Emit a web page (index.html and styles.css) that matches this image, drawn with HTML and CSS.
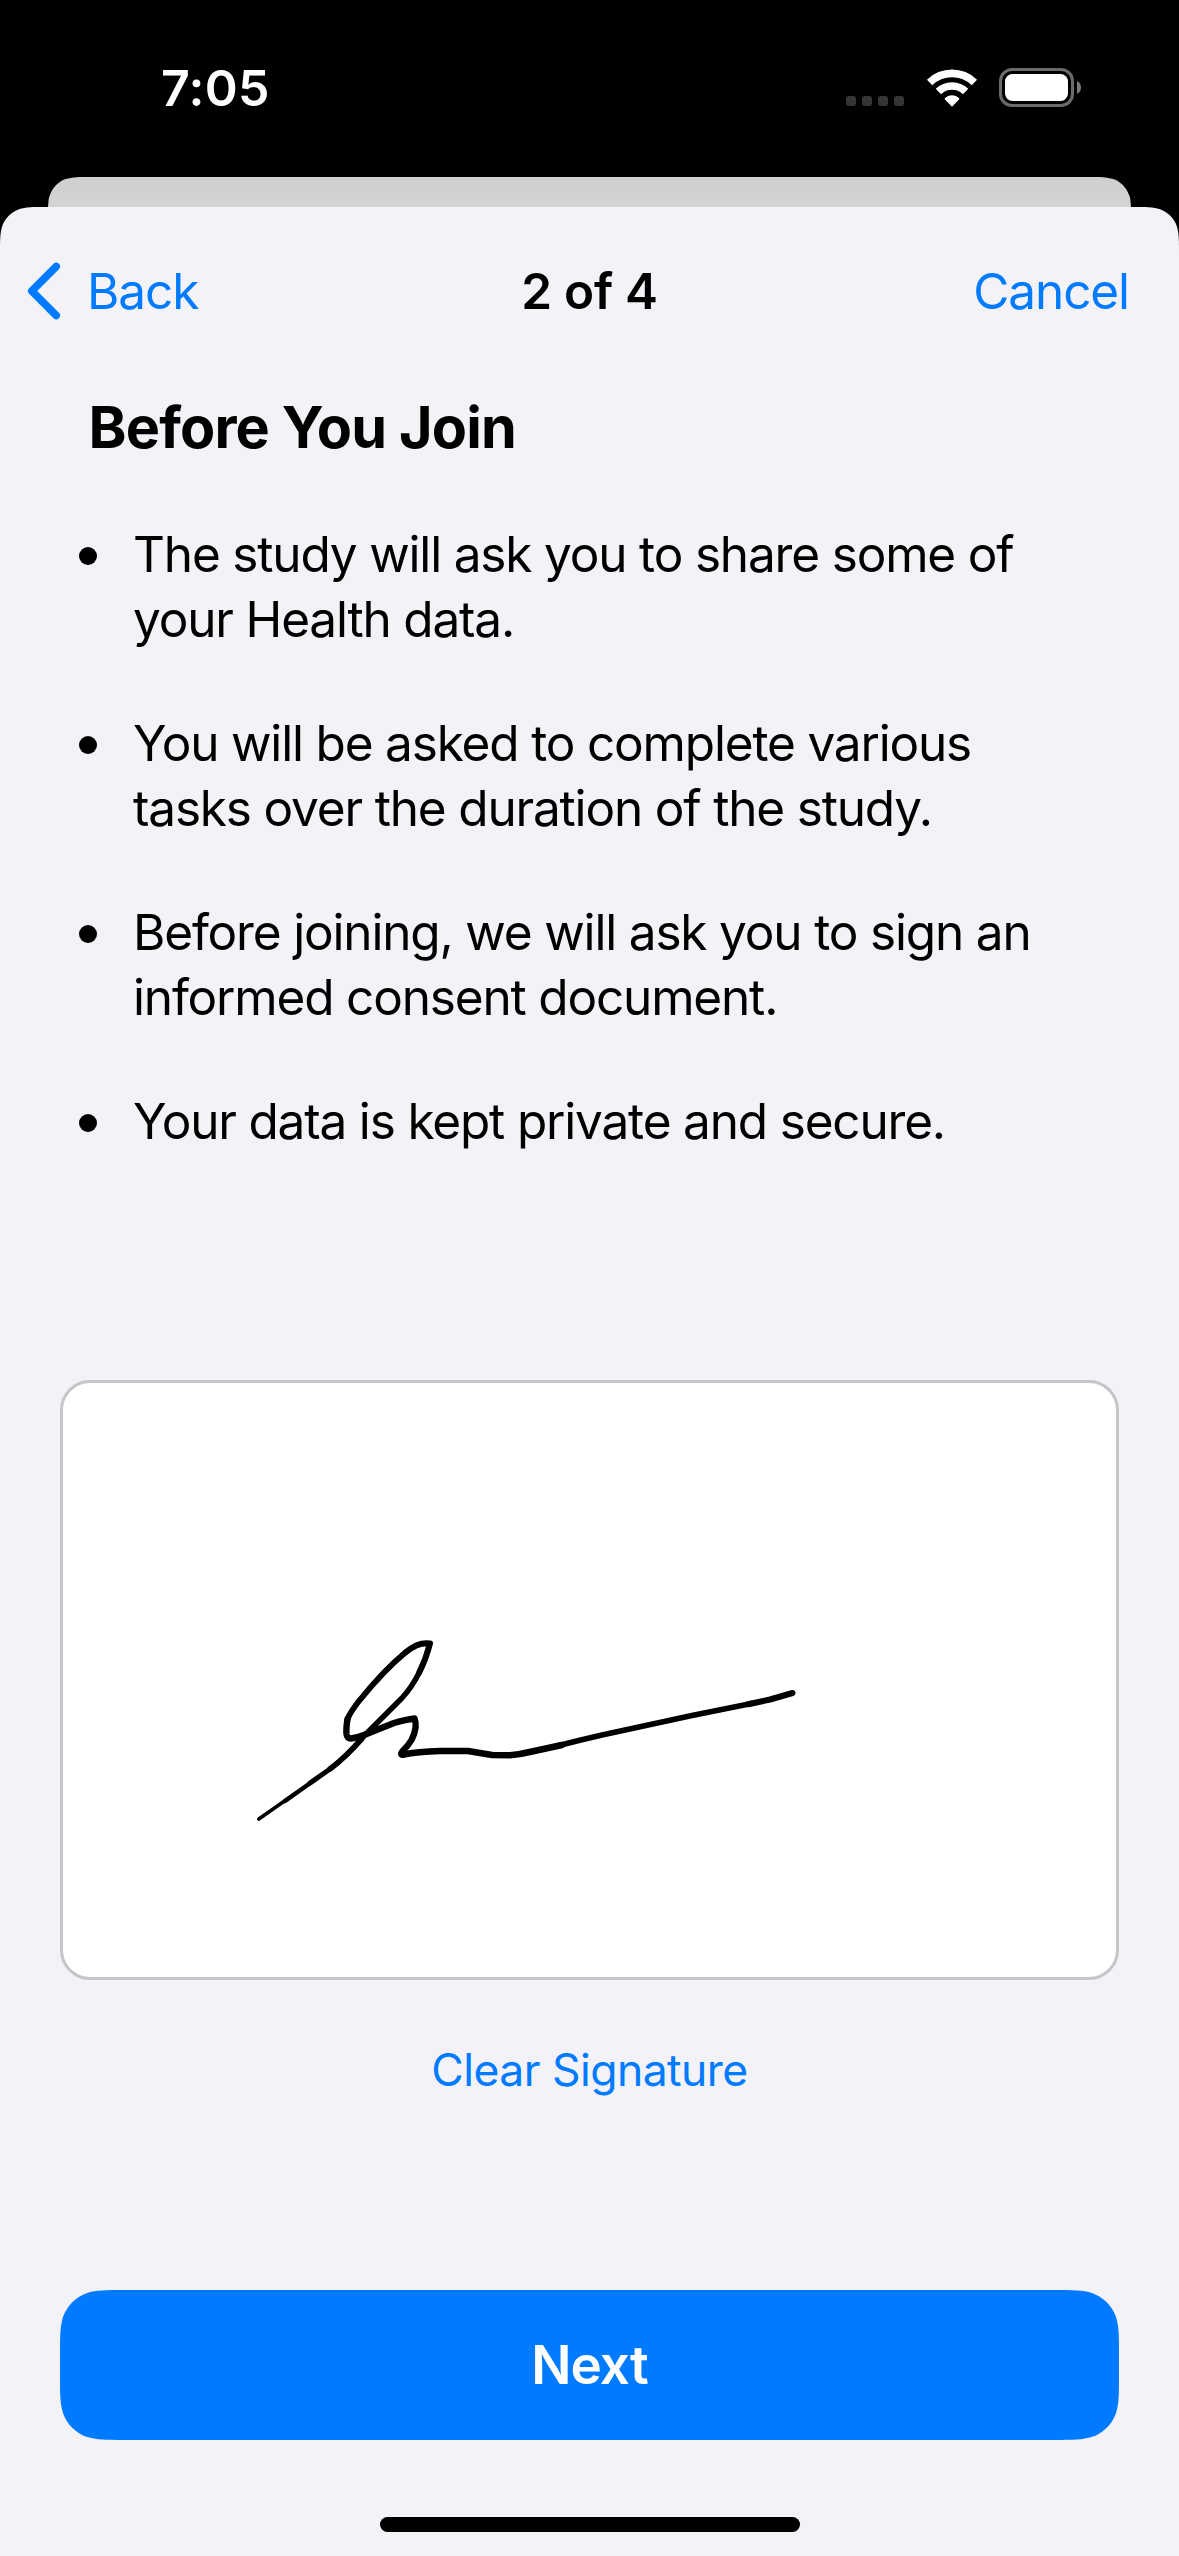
FILE: index.html
```html
<!DOCTYPE html>
<html lang="en">
<head>
<meta charset="utf-8">
<title>Before You Join</title>
<link rel="stylesheet" href="styles.css">
</head>
<body>
<div class="phone">
  <div class="status-bar">
    <span class="time">7:05</span>
    <div class="status-icons">
      <div class="cell-dots"><i></i><i></i><i></i><i></i></div>
      <svg class="wifi" width="52" height="38" viewBox="0 0 52 38">
        <g fill="none" stroke="#fff" stroke-width="7.6">
          <path d="M3.6 13.4 A32.4 32.4 0 0 1 48.4 13.4"/>
          <path d="M12.4 22.5 A19.6 19.6 0 0 1 39.6 22.5"/>
        </g>
        <path fill="#fff" d="M26 37.8 L18.7 30.2 Q18.6 29.2 19.6 28.4 Q26 23.9 32.4 28.4 Q33.4 29.2 33.3 30.2 Z"/>
      </svg>
      <svg class="battery" width="83" height="39" viewBox="0 0 83 39">
        <rect x="1.5" y="1.5" width="72" height="36" rx="11.5" fill="none" stroke="#6b6b6b" stroke-width="3"/>
        <rect x="6" y="6" width="63" height="27" rx="7.5" fill="#fff"/>
        <path d="M78 13 Q82 15 82 19.5 Q82 24 78 26 Z" fill="#7b7b7b"/>
      </svg>
    </div>
  </div>
  <div class="back-card"></div>
  <div class="sheet">
    <div class="nav">
      <a class="nav-back">
        <svg width="34" height="58" viewBox="0 0 34 58"><path d="M29.2 4.5 L4.8 29 L29.2 53.5" fill="none" stroke="#007aff" stroke-width="7.6" stroke-linecap="round" stroke-linejoin="round"/></svg>
        <span>Back</span>
      </a>
      <div class="nav-title">2 of 4</div>
      <a class="nav-cancel">Cancel</a>
    </div>
    <h1 class="heading">Before You Join</h1>
    <ul class="points">
      <li>The study will ask you to share some of<br>your Health data.</li>
      <li>You will be asked to complete various<br>tasks over the duration of the study.</li>
      <li>Before joining, we will ask you to sign an<br>informed consent document.</li>
      <li>Your data is kept private and secure.</li>
    </ul>
    <div class="signature">
      <svg width="1053" height="594" viewBox="63 1383 1053 594">
        <g fill="none" stroke="#000" stroke-linecap="round" stroke-linejoin="round">
          <path stroke-width="3.6" d="M258.8 1819 L296 1793"/>
          <path stroke-width="4.4" d="M285 1801 L316 1779"/>
          <path stroke-width="5" d="M310 1783 L330 1769 Q346 1757 362 1739"/>
          <path stroke-width="5.4" d="M330 1769 Q346 1757 362 1738 L402 1698 Q412 1687 419 1673"/>
          <path stroke-width="6" d="M419 1673 Q426 1659 430 1643.5 Q419 1641.5 406 1652"/>
          <path stroke-width="5.8" d="M406 1652 Q384 1670 359 1701 Q351 1711 347.5 1719"/>
          <path stroke-width="6.4" d="M347.5 1719 Q346 1728 346.5 1734 Q347 1738.5 351 1738.5 Q358 1737.5 364 1735 L394 1723 Q406 1719.5 414.5 1718.5 Q418 1727 411.5 1740 Q408 1746 402.5 1751 Q400 1754.5 402.5 1754.7"/>
          <path stroke-width="6.6" d="M402.5 1754.7 Q418 1751.500 440 1751 L468 1751 L492 1755 L510 1755.2 Q520 1754.5 532 1751.5 L562 1745"/>
          <path stroke-width="5.6" d="M556 1746.300 Q580 1740 602 1735 L692 1715.5 L754 1703"/>
          <path stroke-width="6" d="M748 1704.3 L770 1699.5 L792.5 1693"/>
        </g>
      </svg>
    </div>
    <a class="clear">Clear Signature</a>
    <button class="next">Next</button>
    <div class="home-indicator"></div>
  </div>
</div>
</body>
</html>
```
FILE: styles.css
```css
* { box-sizing: border-box; }

body {
  margin: 0;
  background: #000;
  color: #000;
  font-family: Inter, "Liberation Sans", sans-serif;
  font-size: 49.5px;
}

.phone {
  width: 1179px;
  height: 2556px;
  display: flex;
  flex-direction: column;
  overflow: hidden;
}

.status-bar {
  height: 177px;
  padding: 0 97px 0 161px;
  display: flex;
  justify-content: space-between;
  align-items: flex-start;
}

.time {
  margin-top: 58px;
  font-size: 50px;
  line-height: 60px;
  font-weight: 600;
  letter-spacing: 0.3px;
  color: #fff;
}

.status-icons {
  display: flex;
  margin-top: 68px;
}

.cell-dots {
  display: flex;
  gap: 6px;
  margin: 28px 22px 0 0;
}

.cell-dots i {
  width: 10px;
  height: 10px;
  border-radius: 3px;
  background: #353535;
}

.wifi { margin: 1px 21px 0 0; }

.back-card {
  height: 30px;
  flex: none;
  margin: 0 48px;
  background: linear-gradient(#cfcfcf, #d4d4d4);
  clip-path: path("M0 30 C0.5 24 0.6 20 2.1 17.7 C4.7 10.4 10.4 4.7 17.7 2.1 C24.3 0 30.5 0 42.8 0 L1040.2 0 C1052.5 0 1058.7 0 1065.3 2.1 C1072.6 4.7 1078.3 10.4 1080.9 17.7 C1082.4 20 1082.5 24 1083 30 Z");
}

.sheet {
  height: 2349px;
  display: flex;
  flex-direction: column;
  background: #f2f2f7;
  clip-path: path("M0 2349 L0 45.86 C0 32.65 0 26.05 2.25 18.94 C5.07 11.18 11.18 5.07 18.94 2.25 C26.05 0 32.65 0 45.86 0 L1133.14 0 C1146.35 0 1152.95 0 1160.06 2.25 C1167.82 5.07 1173.93 11.18 1176.75 18.94 C1179 26.05 1179 32.65 1179 45.86 L1179 2349 Z");
}

.nav {
  height: 168px;
  display: grid;
  grid-template-columns: 1fr auto 1fr;
  align-items: center;
}

.nav-back {
  display: flex;
  align-items: center;
  gap: 26px;
  padding-left: 27px;
  letter-spacing: -1.1px;
  color: #007aff;
}

.nav-title {
  font-weight: 600;
  letter-spacing: -0.3px;
}

.nav-cancel {
  justify-self: end;
  padding-right: 50px;
  letter-spacing: -1.1px;
  color: #007aff;
}

.heading {
  margin: 17px 0 0 88.5px;
  font-size: 57.5px;
  line-height: 70px;
  font-weight: 700;
  letter-spacing: -0.82px;
}

.points {
  margin: 59.5px 0 0;
  padding: 0 0 0 79px;
  list-style: none;
  display: flex;
  flex-direction: column;
  gap: 59px;
  line-height: 65px;
  letter-spacing: -1.17px;
}

.points li {
  display: grid;
  grid-template-columns: 18px auto;
  column-gap: 36px;
  white-space: nowrap;
}

.points li::before {
  content: "";
  width: 18px;
  height: 18px;
  margin-top: 25.5px;
  border-radius: 50%;
  background: #000;
}

.signature {
  height: 600px;
  flex: none;
  margin: 226.5px 60px 0;
  border: 3px solid #c6c6c8;
  border-radius: 30px;
  background: #fff;
}

.signature svg { display: block; }

.clear {
  margin-top: 60px;
  align-self: center;
  font-size: 44.5px;
  line-height: 60px;
  letter-spacing: -0.55px;
  color: #007aff;
}

.next {
  height: 150px;
  margin: 190px 60px 0;
  padding: 0;
  border: 0;
  background: #007aff;
  color: #fff;
  font: 600 53px/150px Inter, "Liberation Sans", sans-serif;
  letter-spacing: -0.9px;
  clip-path: path("M0 64.2 C0 45.72 0 36.47 3.15 26.52 C7.1 15.66 15.66 7.1 26.52 3.15 C36.47 0 45.72 0 64.2 0 L994.8 0 C1013.28 0 1022.53 0 1032.48 3.15 C1043.34 7.1 1051.9 15.66 1055.85 26.52 C1059 36.47 1059 45.72 1059 64.2 L1059 85.8 C1059 104.28 1059 113.53 1055.85 123.48 C1051.9 134.34 1043.34 142.9 1032.48 146.85 C1022.53 150 1013.28 150 994.8 150 L64.2 150 C45.72 150 36.47 150 26.52 146.85 C15.66 142.9 7.1 134.34 3.15 123.48 C0 113.53 0 104.28 0 85.8 Z");
}

.home-indicator {
  width: 420px;
  height: 15px;
  margin: 77px auto 0;
  border-radius: 7.5px;
  background: #000;
}
```
